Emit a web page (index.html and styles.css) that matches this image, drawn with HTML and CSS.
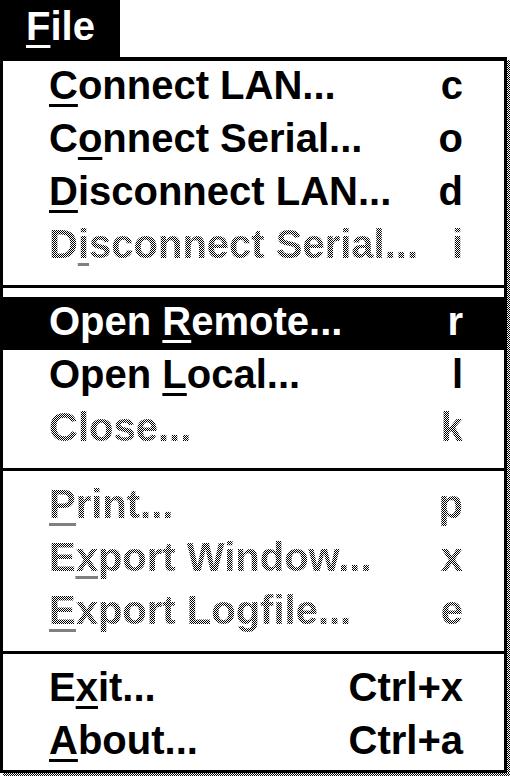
FILE: index.html
```html
<!DOCTYPE html>
<html>
<head>
<meta charset="utf-8">
<link rel="stylesheet" href="styles.css">
</head>
<body>
<div class="title"><span class="u">F</span>ile</div>
<div class="frame">
  <div class="menu">
    <div class="item"><span class="label"><span class="u">C</span>onnect LAN...</span><span class="key">c</span></div>
    <div class="item"><span class="label">C<span class="u">o</span>nnect Serial...</span><span class="key">o</span></div>
    <div class="item"><span class="label"><span class="u">D</span>isconnect LAN...</span><span class="key">d</span></div>
    <div class="item disabled"><span class="label">D<span class="u">i</span>sconnect Serial...</span><span class="key">i</span></div>
    <div class="sep"></div>
    <div class="item active"><span class="label">Open <span class="u">R</span>emote...</span><span class="key">r</span></div>
    <div class="item"><span class="label">Open <span class="u">L</span>ocal...</span><span class="key">l</span></div>
    <div class="item disabled"><span class="label">Close...</span><span class="key">k</span></div>
    <div class="sep"></div>
    <div class="item disabled"><span class="label"><span class="u">P</span>rint...</span><span class="key">p</span></div>
    <div class="item disabled"><span class="label">E<span class="u">x</span>port Window...</span><span class="key">x</span></div>
    <div class="item disabled"><span class="label"><span class="u">E</span>xport Logfile...</span><span class="key">e</span></div>
    <div class="sep"></div>
    <div class="item"><span class="label">E<span class="u">x</span>it...</span><span class="key">Ctrl+x</span></div>
    <div class="item"><span class="label"><span class="u">A</span>bout...</span><span class="key">Ctrl+a</span></div>
  </div>
  <div class="shadow-right"></div>
  <div class="shadow-bottom"></div>
</div>
</body>
</html>
```
FILE: styles.css
```css
html, body {
  margin: 0;
  padding: 0;
  background: #fff;
}
body {
  width: 510px;
  height: 777px;
  overflow: hidden;
  font-family: "Liberation Sans", Arial, sans-serif;
  font-weight: bold;
  font-size: 40px;
  color: #000;
}
.title {
  display: inline-block;
  background: #000;
  color: #fff;
  height: 57px;
  line-height: 53px;
  padding: 0 25px 0 26px;
  vertical-align: top;
}
.u {
  text-decoration: underline;
  text-decoration-thickness: 3px;
  text-underline-offset: 5px;
}
.frame {
  display: grid;
  grid-template-columns: 507px 3px;
  grid-template-rows: auto 3px;
}
.menu {
  grid-column: 1;
  grid-row: 1;
  border: 3px solid #000;
  border-top-width: 4px;
  background: #fff;
  padding-bottom: 1px;
}
.shadow-right {
  grid-column: 2;
  grid-row: 1;
  margin-top: 3px;
  background: repeating-conic-gradient(#000 0 25%, #fff 0 50%) 0 0 / 2px 2px;
}
.shadow-bottom {
  grid-column: 1 / 3;
  grid-row: 2;
  margin-left: 3px;
  background: repeating-conic-gradient(#000 0 25%, #fff 0 50%) 0 0 / 2px 2px;
}
.item {
  display: flex;
  justify-content: space-between;
  height: 53px;
  line-height: 48px;
  padding: 0 41px 0 46px;
  white-space: nowrap;
}
.item.active {
  background: #000;
  color: #fff;
}
.item.disabled .label,
.item.disabled .key {
  background: repeating-conic-gradient(#000 0 25%, #fff 0 50%) 0 0 / 2px 2px;
  -webkit-background-clip: text;
  background-clip: text;
  color: transparent;
}
.item.disabled .u {
  text-decoration-color: #808080;
}
.sep {
  height: 3px;
  background: #000;
  margin: 12px 0 9px;
}
```
